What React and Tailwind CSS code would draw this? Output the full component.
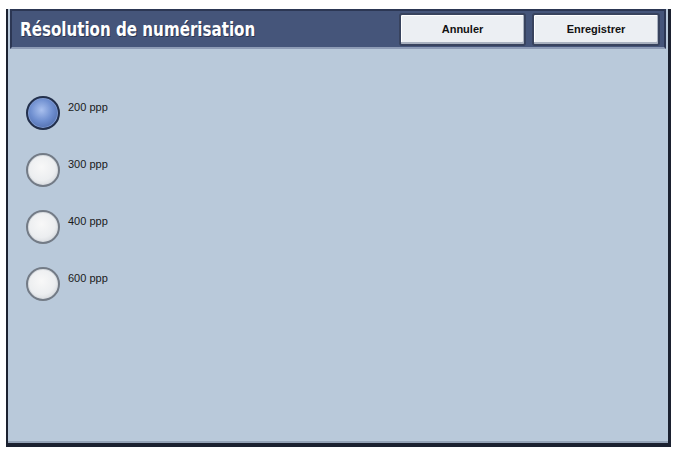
import React from 'react';

const options = ['200 ppp', '300 ppp', '400 ppp', '600 ppp'];

const Radio = ({ checked }) => (
  <div
    className={`w-[34px] h-[34px] rounded-full shrink-0 border-2 ${
      checked
        ? 'border-[#23304c] bg-[radial-gradient(circle_at_45%_40%,#a9c0ee_0%,#6f8fd0_45%,#3f5a98_100%)] shadow-[inset_0_0_0_1px_#7f9ad0]'
        : 'border-[#737b86] bg-[radial-gradient(circle_at_45%_40%,#f8f8f8_0%,#eceef0_55%,#c6cad0_100%)] shadow-[inset_0_0_0_1px_#d8dce0]'
    }`}
  />
);

export default function App() {
  return (
    <div className="w-[676px] h-[451px] bg-white pt-[9px] pl-[6px]" style={{ fontFamily: '"Liberation Sans", Arial, sans-serif' }}>
      <div className="w-[665px] h-[438px] bg-[#b9c9da] border-l-2 border-r-[3px] border-b-[4px] border-[#1b2130] flex flex-col">
        {/* Barre de titre */}
        <div className="mx-[2px] h-[40px] bg-[#45557a] border-2 border-[#2c3754] border-b-[#8e9cb6] flex items-center justify-between pl-[8px] pr-[4px]">
          <span
            className="text-white font-bold text-[20px] leading-none font-stretch-condensed origin-left scale-x-[0.84] whitespace-nowrap [text-shadow:1px_1px_0_#2a3450]"
            style={{ fontFamily: '"DejaVu Sans Condensed", "DejaVu Sans", sans-serif' }}
          >
            Résolution de numérisation
          </span>
          <div className="flex gap-[6px]">
            <button className="w-[127px] h-[33px] rounded-[3px] border-2 border-[#38435e] bg-[#eceff3] shadow-[inset_-1px_-2px_0_#aab2c0,inset_1px_1px_0_#ffffff] text-[11px] font-bold text-[#111]">
              Annuler
            </button>
            <button className="w-[128px] h-[33px] rounded-[3px] border-2 border-[#38435e] bg-[#eceff3] shadow-[inset_-1px_-2px_0_#aab2c0,inset_1px_1px_0_#ffffff] text-[11px] font-bold text-[#111]">
              Enregistrer
            </button>
          </div>
        </div>

        {/* Options */}
        <div className="flex-1 flex flex-col gap-[23px] pt-[47px] pl-[18px] border-b-2 border-[#95a4b8]">
          {options.map((opt, i) => (
            <div key={opt} className="flex items-start gap-[8px]">
              <Radio checked={i === 0} />
              <span className="mt-[5px] text-[11px] leading-[13px] text-[#1a1a1a]">{opt}</span>
            </div>
          ))}
        </div>
      </div>
    </div>
  );
}
